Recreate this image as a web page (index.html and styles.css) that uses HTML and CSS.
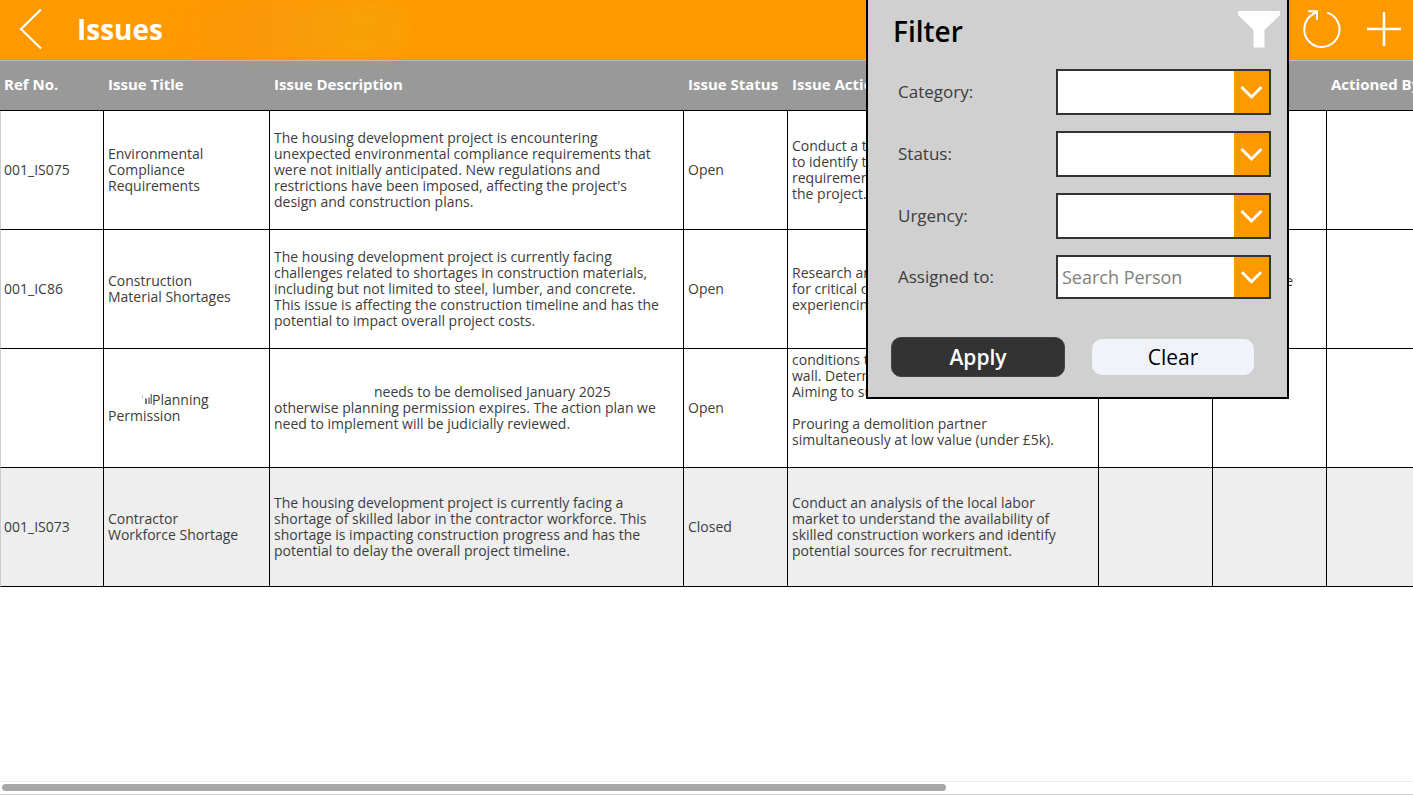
FILE: index.html
```html
<!DOCTYPE html>
<html lang="en">
<head>
<meta charset="utf-8">
<title>Issues</title>
<meta name="viewport" content="width=device-width, initial-scale=1">
<link rel="stylesheet" href="styles.css">
</head>
<body>
<div class="app">
  <header class="topbar">
    <button class="icon-btn back" aria-label="Back">
      <svg width="24" height="42" viewBox="0 0 24 42"><path d="M22 1.500 2 21l20 19.500" fill="none" stroke="#fff" stroke-width="2.200"/></svg>
    </button>
    <h1 class="title">Issues</h1>
    <span class="smudge"></span>
    <div class="actions">
      <button class="icon-btn" aria-label="Refresh">
        <svg width="40" height="40" viewBox="0 0 40 40" fill="none" stroke="#fff" stroke-width="2"><path d="M25.200 3.600A17.600 17.600 0 1 1 11 5.200L14.500 3"/><path d="M6 2.200h9v8.600M14.800 2.500 8 7.300"/></svg>
      </button>
      <button class="icon-btn" aria-label="Add issue">
        <svg width="34" height="34" viewBox="0 0 34 34"><path d="M17 0v34M0 17h34" stroke="#fff" stroke-width="2.500"/></svg>
      </button>
    </div>
  </header>

  <main class="grid">
    <table class="issues">
      <colgroup>
        <col class="c-ref"><col class="c-title"><col class="c-desc"><col class="c-status"><col class="c-action"><col class="c-small"><col class="c-small"><col class="c-rest">
      </colgroup>
      <thead>
        <tr><th>Ref No.</th><th>Issue Title</th><th>Issue Description</th><th>Issue Status</th><th>Issue Action</th><th></th><th></th><th>Actioned By</th></tr>
      </thead>
      <tbody>
        <tr>
          <td>001_IS075</td>
          <td>Environmental<br>Compliance<br>Requirements</td>
          <td>The housing development project is encountering unexpected environmental compliance requirements that were not initially anticipated. New regulations and restrictions have been imposed, affecting the project's design and construction plans.</td>
          <td>Open</td>
          <td>Conduct a th<br>to identify th<br>requirement<br>the project.</td>
          <td></td><td></td><td></td>
        </tr>
        <tr>
          <td>001_IC86</td>
          <td>Construction<br>Material Shortages</td>
          <td>The housing development project is currently facing challenges related to shortages in construction materials, including but not limited to steel, lumber, and concrete. This issue is affecting the construction timeline and has the potential to impact overall project costs.</td>
          <td>Open</td>
          <td>Research an<br>for critical c<br>experiencing</td>
          <td></td><td class="end">e</td><td></td>
        </tr>
        <tr>
          <td></td>
          <td><svg class="mark" width="44" height="12" viewBox="0 0 44 12"><path d="M34.500 2.500v3" stroke="#bbb"/><path d="M38 5.500v5.500" stroke="#777" stroke-width="2"/><path d="M41 4.500v6.500M43.300 1v10" stroke="#777" stroke-width="1.500"/></svg>Planning<br>Permission</td>
          <td><span class="gap"></span>needs to be demolised January 2025 otherwise planning permission expires. The action plan we need to implement will be judicially reviewed.</td>
          <td>Open</td>
          <td class="top">conditions th<br>wall. Determ<br>Aiming to su<br><br>Prouring a demolition partner<br>simultaneously at low value (under £5k).</td>
          <td></td><td></td><td></td>
        </tr>
        <tr class="closed">
          <td>001_IS073</td>
          <td>Contractor<br>Workforce Shortage</td>
          <td>The housing development project is currently facing a shortage of skilled labor in the contractor workforce. This shortage is impacting construction progress and has the potential to delay the overall project timeline.</td>
          <td>Closed</td>
          <td>Conduct an analysis of the local labor market to understand the availability of skilled construction workers and identify potential sources for recruitment.</td>
          <td></td><td></td><td></td>
        </tr>
      </tbody>
    </table>
  </main>
  <div class="scrollbar"><div class="thumb"></div></div>

  <form class="filter">
    <div class="filter-head">
      <h2>Filter</h2>
      <svg width="42" height="38" viewBox="0 0 42 38"><path d="M0 1h42v4L26.500 20v17.500h-11V20L0 5z" fill="#fff"/></svg>
    </div>
    <div class="field">
      <label for="category">Category:</label>
      <div class="box"><select id="category"><option></option></select><svg class="chev" viewBox="0 0 35 42"><path d="m7.500 16 10 10 10-10" fill="none" stroke="#fff" stroke-width="3"/></svg></div>
    </div>
    <div class="field">
      <label for="status">Status:</label>
      <div class="box"><select id="status"><option></option></select><svg class="chev" viewBox="0 0 35 42"><path d="m7.500 16 10 10 10-10" fill="none" stroke="#fff" stroke-width="3"/></svg></div>
    </div>
    <div class="field">
      <label for="urgency">Urgency:</label>
      <div class="box"><select id="urgency"><option></option></select><svg class="chev" viewBox="0 0 35 42"><path d="m7.500 16 10 10 10-10" fill="none" stroke="#fff" stroke-width="3"/></svg></div>
    </div>
    <div class="field">
      <label for="person">Assigned to:</label>
      <div class="box person"><input id="person" type="text" placeholder="Search Person"><svg class="chev" viewBox="0 0 35 42"><path d="m7.500 16 10 10 10-10" fill="none" stroke="#fff" stroke-width="3"/></svg></div>
    </div>
    <div class="buttons">
      <button type="submit" class="apply">Apply</button>
      <button type="reset" class="clear">Clear</button>
    </div>
  </form>
</div>
</body>
</html>
```
FILE: styles.css
```css
* { box-sizing: border-box; }
body {
  margin: 0;
  background: #fff;
  color: #3c3c3c;
  font: 400 14px/16px "Open Sans", "Noto Sans", sans-serif;
}
button, input, select { font-family: inherit; }
.app {
  position: relative;
  display: flex;
  flex-direction: column;
  height: 100vh;
  overflow: hidden;
}
.topbar {
  display: flex;
  align-items: center;
  height: 60px;
  flex: none;
  padding: 0 12px 2px 19px;
  background: #ff9900;
}
.icon-btn {
  display: block;
  padding: 0;
  border: 0;
  background: none;
}
.icon-btn svg { display: block; }
.title {
  margin: 0 0 0 34px;
  color: #fff;
  font-size: 28px;
  line-height: 40px;
  font-weight: 700;
}
.smudge {
  width: 240px;
  height: 52px;
  margin-left: 8px;
  background: linear-gradient(100deg, rgba(248, 154, 12, 0), #fa980a 40%, #f9a008 75%, #fb9f04);
  border-radius: 24px;
  filter: blur(6px);
}
.actions {
  display: flex;
  align-items: center;
  gap: 25px;
  margin-left: auto;
}
.grid {
  flex: 1;
  overflow: hidden;
  border-top: 1px solid #bbb;
}
.issues {
  width: 2110px;
  table-layout: fixed;
  border-collapse: separate;
  border-spacing: 0;
}
.c-ref { width: 104px; }
.c-title { width: 166px; }
.c-desc { width: 414px; }
.c-status { width: 104px; }
.c-action { width: 311px; }
.c-small { width: 114px; }
th {
  height: 50px;
  padding: 0 4px 4px;
  background: #999;
  border-bottom: 1px solid #000;
  color: #fff;
  font-size: 15px;
  font-weight: 700;
  text-align: left;
  white-space: nowrap;
}
td {
  height: 119px;
  padding: 0 24px 0 4px;
  border-right: 1px solid #000;
  border-bottom: 1px solid #000;
  vertical-align: middle;
}
td:first-child { border-left: 1px solid #ccc; padding: 0 0 0 3px; }
td:nth-child(2), td:nth-child(4) { padding-right: 0; }
td.top { vertical-align: top; padding-top: 3px; }
td.end { padding: 0 33px 16px 0; text-align: right; }
.closed td { background: #eee; }
.gap { display: inline-block; width: 100px; }
.scrollbar {
  flex: none;
  height: 14px;
  padding: 2px;
  border-top: 1px solid #eee;
  border-bottom: 1px solid #ccc;
}
.thumb {
  width: 67%;
  height: 7px;
  border-radius: 4px;
  background: #a8a8a8;
}
.filter {
  position: absolute;
  top: 0;
  right: 124px;
  width: 423px;
  padding: 10px 17px 20px 23px;
  background: #d0d0d0;
  border: 2px solid #000;
  border-top: 0;
}
.filter-head {
  display: flex;
  justify-content: space-between;
  margin: 0 -10px 17px 2px;
  height: 42px;
}
h2 {
  margin: 0;
  color: #000;
  font-size: 28px;
  line-height: 42px;
  font-weight: 600;
}
.field {
  display: flex;
  align-items: center;
  justify-content: space-between;
  margin-bottom: 16px;
  padding-left: 7px;
}
.field label {
  font-size: 17px;
  line-height: 24px;
}
.box {
  display: flex;
  width: 215px;
  height: 46px;
  border: 2px solid #333;
  background: #fff;
  margin-right: -1px;
}
.person { height: 44px; }
.box select, .box input {
  flex: 1;
  min-width: 0;
  padding: 0 4px;
  border: 0;
  background: #fff;
  color: #333;
  font-size: 18px;
  appearance: none;
  outline: 0;
}
.box input::placeholder { color: #808080; }
.chev {
  flex: none;
  width: 35px;
  height: 100%;
  background: #ff9900;
}
.buttons {
  display: flex;
  align-items: center;
  gap: 27px;
  margin-top: 38px;
}
.apply, .clear {
  border-radius: 10px;
  font-size: 21px;
  line-height: 28px;
}
.apply {
  width: 174px;
  height: 40px;
  border: 1px solid #444;
  background: #333;
  color: #fff;
  font-weight: 600;
}
.clear {
  width: 162px;
  height: 36px;
  border: 0;
  background: #f0f3f9;
  color: #000;
  font-weight: 500;
}
```
